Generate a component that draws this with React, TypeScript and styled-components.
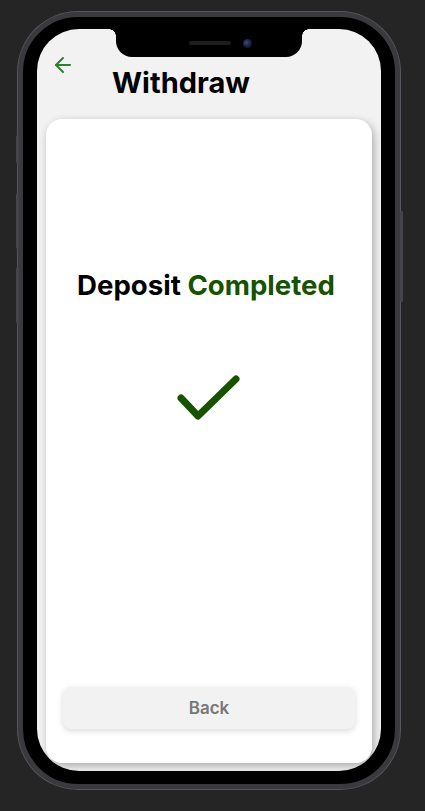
import React from "react";
import styled, { createGlobalStyle } from "styled-components";
import { ArrowLeft } from "lucide-react";

const Global = createGlobalStyle`
  html, body { margin: 0; padding: 0; background: #252525; }
  body { font-family: Inter, "Noto Sans", sans-serif; width: 425px; height: 811px; overflow: hidden; }
`;

const Stage = styled.div`
  padding: 12px 0 0 18px;
`;

const Frame = styled.div`
  position: relative;
  width: 382px;
  height: 777px;
  box-sizing: border-box;
  border: 5px solid #3a3a3e;
  border-radius: 60px;
  background: #000;
  padding: 12px 14px 13px 14px;
  box-shadow: 0 0 0 1px #55555b;
`;

const SideButton = styled.div<{ $side: "left" | "right"; $top: number; $h: number }>`
  position: absolute;
  ${(p) => (p.$side === "left" ? "left: -7px;" : "right: -8px;")}
  top: ${(p) => p.$top}px;
  width: 3px;
  height: ${(p) => p.$h}px;
  background: #44444a;
  border-radius: 2px;
`;

const Screen = styled.div`
  position: relative;
  width: 100%;
  height: 100%;
  background: #f2f2f2;
  border-radius: 42px;
  overflow: hidden;
  display: flex;
  flex-direction: column;
`;

const Notch = styled.div`
  position: absolute;
  top: 0;
  left: 79px;
  width: 186px;
  height: 28px;
  background: #000;
  border-radius: 0 0 16px 16px;
  display: flex;
  align-items: center;
  justify-content: center;
  gap: 12px;
  padding-left: 22px;
  box-sizing: border-box;

  &::before,
  &::after {
    content: "";
    position: absolute;
    top: 0;
    width: 7px;
    height: 7px;
  }
  &::before {
    left: -7px;
    background: radial-gradient(circle at 0 100%, transparent 6.5px, #000 7px);
  }
  &::after {
    right: -7px;
    background: radial-gradient(circle at 100% 100%, transparent 6.5px, #000 7px);
  }
`;

const Speaker = styled.div`
  width: 42px;
  height: 4px;
  border-radius: 2px;
  background: #1e1e20;
`;

const Camera = styled.div`
  width: 9px;
  height: 9px;
  border-radius: 50%;
  background: radial-gradient(circle at 40% 40%, #3a4a8a 0, #1a1f3a 50%, #0c0c12 100%);
`;

const Header = styled.div`
  height: 90px;
  flex-shrink: 0;
  display: flex;
  align-items: flex-start;
`;

const BackIcon = styled.div`
  margin: 24px 0 0 14px;
  width: 24px;
  height: 24px;
  color: #2e7d32;
  display: flex;
`;

const Title = styled.h1`
  margin: 40px 0 0 37px;
  font-size: 29px;
  line-height: 28px;
  font-weight: 700;
  color: #000;
`;

const Card = styled.div`
  flex: 1;
  margin: 0 9px 8px 9px;
  background: #fff;
  border-radius: 16px;
  box-shadow: 2px 3px 8px rgba(0, 0, 0, 0.3);
  display: flex;
  flex-direction: column;
  align-items: center;
  padding-top: 150px;
`;

const Heading = styled.div`
  font-size: 27.6px;
  line-height: 1.2;
  font-weight: 700;
  color: #000;
  margin-right: 6px;
`;

const Accent = styled.span`
  color: #165200;
`;

const Check = styled.svg`
  margin-top: 71px;
  display: block;
`;

const BackButton = styled.button`
  margin: auto 17px 34px 17px;
  align-self: stretch;
  height: 42px;
  border: none;
  border-radius: 8px;
  background: #f2f2f2;
  box-shadow: 0 2px 6px rgba(0, 0, 0, 0.15);
  font-family: Inter, "Noto Sans", sans-serif;
  font-size: 17px;
  font-weight: 600;
  color: #777;
`;

export default function App() {
  return (
    <>
      <Global />
      <Stage>
        <Frame>
          <SideButton $side="left" $top={118} $h={28} />
          <SideButton $side="left" $top={176} $h={56} />
          <SideButton $side="left" $top={250} $h={56} />
          <SideButton $side="right" $top={194} $h={91} />
          <Screen>
            <Notch>
              <Speaker />
              <Camera />
            </Notch>
            <Header>
              <BackIcon>
                <ArrowLeft size={24} strokeWidth={2} />
              </BackIcon>
              <Title>Withdraw</Title>
            </Header>
            <Card>
              <Heading>
                Deposit <Accent>Completed</Accent>
              </Heading>
              <Check width="66" height="50" viewBox="0 0 66 50">
                <polyline
                  points="5,25 22,43 60,6"
                  fill="none"
                  stroke="#165200"
                  strokeWidth="7"
                  strokeLinecap="round"
                  strokeLinejoin="round"
                />
              </Check>
              <BackButton>Back</BackButton>
            </Card>
          </Screen>
        </Frame>
      </Stage>
    </>
  );
}
